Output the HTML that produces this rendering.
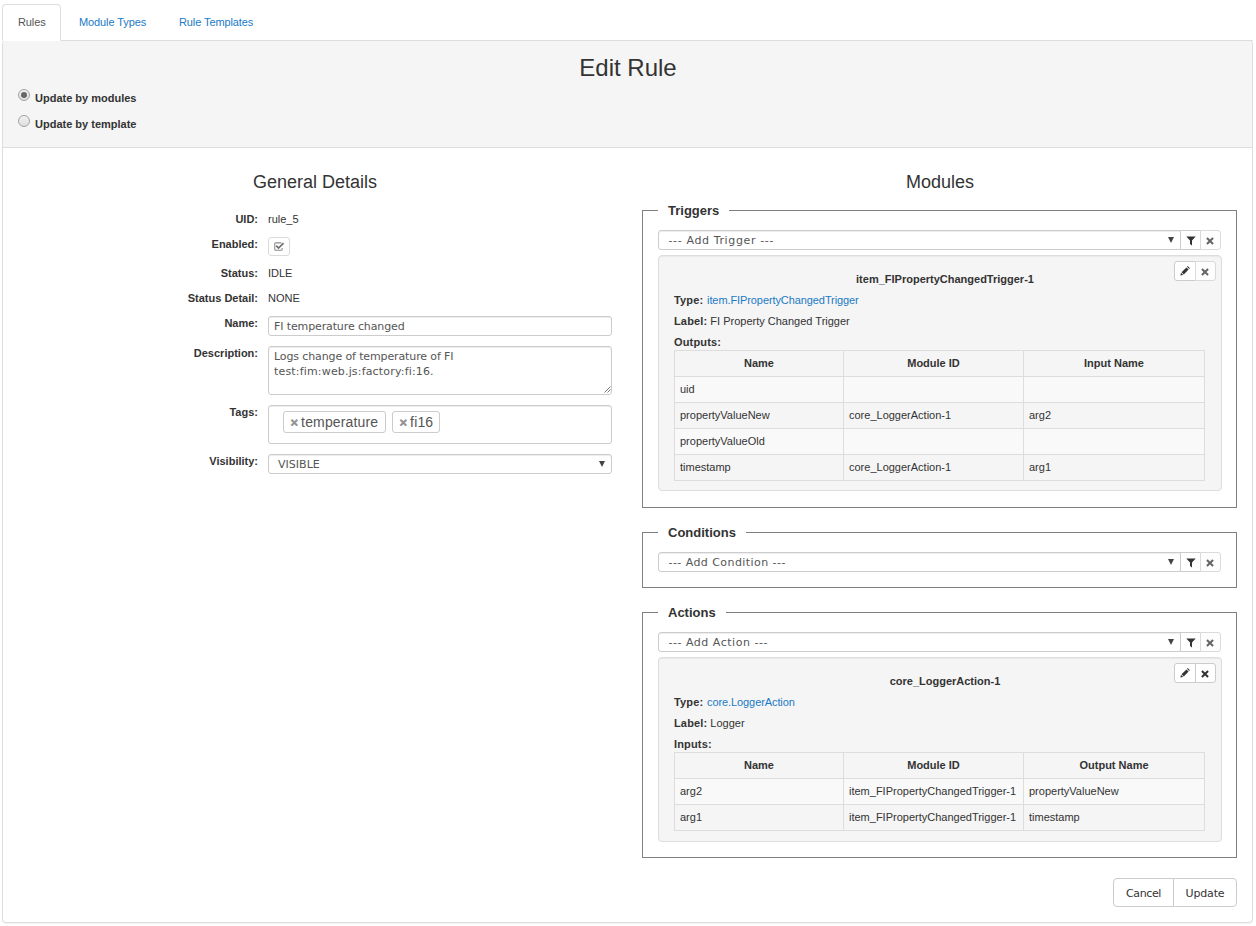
<!DOCTYPE html>
<html lang="en">
<head>
<meta charset="utf-8">
<title>Edit Rule</title>
<style>
*{box-sizing:border-box}
html,body{margin:0;padding:0;background:#fff}
body{width:1256px;height:926px;position:relative;overflow:hidden;font-family:"Liberation Sans",Arial,sans-serif;font-size:11px;line-height:16px;color:#333}
a{color:#1a7ac6;text-decoration:none}
.abs{position:absolute}
.ui{font-family:"DejaVu Sans","Liberation Sans",sans-serif;font-variant-ligatures:none;letter-spacing:-0.12px}

/* tabs */
.tabs{z-index:2;position:absolute;left:2px;top:4px;width:1251px;letter-spacing:-0.1px;height:37px;border-bottom:1px solid #ddd;margin:0;padding:0;list-style:none}
.tabs li{float:left;white-space:nowrap;height:37px;margin-right:2px;padding:9px 15px 0 15px;border:1px solid transparent;border-radius:4px 4px 0 0;line-height:16px}
.tabs li.active{border-color:#ddd;border-bottom-color:#fff;background:#fff;color:#555}

/* panel */
.pin{position:absolute;left:1px;top:0;width:1248px;height:881px}
.panel{position:absolute;left:2px;top:40px;width:1251px;height:883px;border:1px solid #ddd;border-radius:4px;background:#fff;box-shadow:0 1px 1px rgba(0,0,0,.05)}
.phead{position:absolute;left:-1px;top:0;width:1249px;height:107px;background:#f5f5f5;border-bottom:1px solid #ddd;border-radius:3px 3px 0 0}
h1{position:absolute;left:1px;top:14px;width:1248px;margin:0;text-align:center;font-size:24px;line-height:26px;font-weight:normal;color:#333}
h2{position:absolute;margin:0;text-align:center;font-size:18px;line-height:20px;font-weight:normal;color:#333}
.radio{position:absolute;left:15px;font-weight:bold;line-height:16px}
.radio i{position:absolute;left:0;top:0;width:12px;height:12px;border-radius:50%;border:1px solid #a3a3a3;background:linear-gradient(#f2f2f2,#dedede)}
.radio i.on:after{content:"";position:absolute;left:2px;top:2px;width:6px;height:6px;border-radius:50%;background:#666}
.radio span{position:absolute;left:17px;top:1px;white-space:nowrap}

/* left form */
.frm{position:absolute;left:0;top:-1px}
.frm label{position:absolute;left:0;width:254px;text-align:right;font-weight:bold;line-height:16px;white-space:nowrap}
.frm .val{position:absolute;left:264px;line-height:16px;white-space:nowrap}
.inp{position:absolute;left:264px;width:344px;border:1px solid #ccc;border-radius:3px;background:#fff;padding:0 5px;color:#555;font-size:11px;white-space:nowrap;box-shadow:inset 0 1px 1px rgba(0,0,0,.075)}
.chk{position:absolute;left:264px;width:22px;height:19px;border:1px solid #dbdbdb;border-radius:3px;background:#fff}
.chk svg{position:absolute;left:4px;top:3px}
.grip{position:absolute;right:0;bottom:1px}
.tag{position:absolute;top:5px;height:22px;border:1px solid #ccc;border-radius:3px;font-size:14px;line-height:19px;color:#555;padding-left:6px;padding-top:1px;white-space:nowrap;background:#fff;letter-spacing:.15px}
.tag b{font-weight:bold;color:#8f8f8f;-webkit-text-stroke:.5px #8f8f8f;font-size:13px;margin:0 3px 0 .5px;position:relative;top:0px;letter-spacing:0}
.caret{position:absolute;width:0;height:0;border-left:3.5px solid transparent;border-right:3.5px solid transparent;border-top:6px solid #444}

/* right side */
.fs{position:absolute;left:638px;width:595px;border:1px solid #808080}
.lg{position:absolute;left:15px;top:-9px;padding:0 10px;background:#fff;font-size:13px;font-weight:bold;line-height:18px;white-space:nowrap;color:#333}
.sel{position:absolute;left:15px;width:523px;height:20px;border:1px solid #ccc;border-radius:3px 0 0 3px;background:#fff;padding:1px 0 0 9.5px;line-height:18px;font-size:11px;color:#555;white-space:nowrap;letter-spacing:.63px;box-shadow:inset 0 1px 1px rgba(0,0,0,.075)}
.sb{position:absolute;width:20px;height:20px;border:1px solid #ccc;background:#fff}
.sb.dis{border-color:#dadada;background:#fdfdfd}
.sb.dis svg{opacity:.75}
.sb .ic{position:absolute;left:50%;top:50%;transform:translate(-50%,-50%)}
.sb .ic.x{margin:.6px 0 0 -.4px}
.sb .ic.f{margin-top:1px}
.sb .ic.p{margin-top:.2px}
.mod{position:absolute;left:15px;width:564px;border:1px solid #ddd;border-radius:4px;background:#f5f5f5;box-shadow:inset 0 1px 1px rgba(0,0,0,.05)}
.mt{position:absolute;left:5px;width:562px;text-align:center;font-weight:bold;line-height:16px}
.ml{position:absolute;left:15px;line-height:16px;white-space:nowrap}
.ml a{margin-left:.7px;letter-spacing:-0.09px}
.ml b{letter-spacing:.15px}
.mod table{position:absolute;left:15px;width:531px;border-collapse:collapse;table-layout:fixed}
.mod tr:nth-child(even){background:#f9f9f9}
.mod th,.mod td{border:1px solid #ddd;height:26px;padding:0 5px 2px;line-height:16px;text-align:left;vertical-align:middle;white-space:nowrap;overflow:hidden;font-weight:normal}
.mod th{text-align:center;font-weight:bold}
.btn{position:absolute;height:29px;border:1px solid #ccc;background:#fff;text-align:center;line-height:27px;padding-top:1px;font-size:11px;color:#333;white-space:nowrap}
</style>
</head>
<body>
<ul class="tabs">
  <li class="active" style="width:59px">Rules</li>
  <li style="width:98px"><a>Module Types</a></li>
  <li><a>Rule Templates</a></li>
</ul>
<div class="panel"><div class="pin">
  <div class="phead">
    <h1>Edit Rule</h1>
    <div class="radio" style="top:48px"><i class="on"></i><span>Update by modules</span></div>
    <div class="radio" style="top:74px"><i></i><span>Update by template</span></div>
  </div>
  <h2 style="left:-1px;top:131px;width:624px">General Details</h2>
  <h2 style="left:624px;top:131px;width:624px">Modules</h2>

  <!-- General details form -->
  <div class="frm">
    <label style="top:171px">UID:</label><div class="val" style="top:171px">rule_5</div>
    <label style="top:196px">Enabled:</label>
    <div class="chk" style="top:197px"><svg width="12" height="12" viewBox="0 0 12 12"><path d="M9.2 7v1.3a1 1 0 0 1-1 1H2.75a1 1 0 0 1-1-1V2.85a1 1 0 0 1 1-1H8.4" fill="none" stroke="#8c8c8c" stroke-width="1.05"/><path d="M3.2 4.7l2.3 2.3 5.1-4.8" fill="none" stroke="#707070" stroke-width="1.7"/></svg></div>
    <label style="top:225px">Status:</label><div class="val" style="top:225px">IDLE</div>
    <label style="top:250px">Status Detail:</label><div class="val" style="top:250px">NONE</div>
    <label style="top:275px">Name:</label>
    <div class="inp ui" style="top:276px;height:20px;line-height:18px;padding-top:1px">FI temperature changed</div>
    <label style="top:305px">Description:</label>
    <div class="inp ui" style="top:306px;height:49px;line-height:15px;padding-top:2px">Logs change of temperature of FI<br><span style="letter-spacing:.17px">test:fim:web.js:factory:fi:16.</span><svg class="grip" width="8" height="8" viewBox="0 0 8 8"><path d="M7.5 1.5l-6 6M7.5 4.5l-3 3" stroke="#777" stroke-width="1" fill="none"/></svg></div>
    <label style="top:364px">Tags:</label>
    <div class="inp" style="top:365px;height:39px">
      <span class="tag" style="left:14px;width:103px"><b>×</b>temperature</span>
      <span class="tag" style="left:123px;width:48px"><b>×</b>fi16</span>
    </div>
    <label style="top:413px">Visibility:</label>
    <div class="inp ui" style="top:414px;height:20px;line-height:18px;padding-left:9px;padding-top:1px;letter-spacing:0.03px">VISIBLE<i class="caret" style="right:6px;top:6px"></i></div>
  </div>


  <!-- Triggers -->
  <div class="fs" style="top:169px;height:298px">
    <div class="lg">Triggers</div>
    <div class="sel ui" style="top:19px">--- Add Trigger ---<i class="caret" style="right:6px;top:6px"></i></div>
    <div class="sb" style="left:537px;top:19px;width:21px"><svg class="ic f" width="10" height="10" viewBox="0 0 10 10"><path d="M0.3 0.6h9.4L6 4.6v5L4 8V4.6z" fill="#333"/></svg></div>
    <div class="sb dis" style="left:557px;top:19px;width:21px;border-radius:0 3px 3px 0"><svg class="ic x" width="8" height="8" viewBox="0 0 8 8"><path d="M0.95 0.95l6.1 6.1M7.05 0.95L0.95 7.05" stroke="#333" stroke-width="2.05" fill="none"/></svg></div>
    <div class="mod" style="top:44px;height:236px">
      <div class="sb" style="left:515px;top:5px;width:22px;border-radius:3px 0 0 3px"><svg class="ic p" width="10" height="10" viewBox="0 0 10 10"><path d="M0.4 9.6l0.6-2.8 2.2 2.2zM1.6 6.2l4.8-4.8 2.2 2.2-4.8 4.8zM7 0.8l0.7-0.7 2.2 2.2-0.7 0.7z" fill="#333"/></svg></div>
      <div class="sb dis" style="left:536px;top:5px;width:21px;border-radius:0 3px 3px 0"><svg class="ic x" width="8" height="8" viewBox="0 0 8 8"><path d="M0.95 0.95l6.1 6.1M7.05 0.95L0.95 7.05" stroke="#333" stroke-width="2.05" fill="none"/></svg></div>
      <div class="mt" style="top:15px">item_FIPropertyChangedTrigger-1</div>
      <div class="ml" style="top:36px"><b>Type:</b> <a>item.FIPropertyChangedTrigger</a></div>
      <div class="ml" style="top:57px"><b>Label:</b> FI Property Changed Trigger</div>
      <div class="ml" style="top:78px"><b>Outputs:</b></div>
      <table style="top:94px">
        <tr><th style="width:169px">Name</th><th style="width:180px">Module ID</th><th>Input Name</th></tr>
        <tr><td>uid</td><td></td><td></td></tr>
        <tr><td>propertyValueNew</td><td>core_LoggerAction-1</td><td>arg2</td></tr>
        <tr><td>propertyValueOld</td><td></td><td></td></tr>
        <tr><td>timestamp</td><td>core_LoggerAction-1</td><td>arg1</td></tr>
      </table>
    </div>
  </div>

  <!-- Conditions -->
  <div class="fs" style="top:491px;height:56px">
    <div class="lg">Conditions</div>
    <div class="sel ui" style="top:19px;letter-spacing:.44px">--- Add Condition ---<i class="caret" style="right:6px;top:6px"></i></div>
    <div class="sb" style="left:537px;top:19px;width:21px"><svg class="ic f" width="10" height="10" viewBox="0 0 10 10"><path d="M0.3 0.6h9.4L6 4.6v5L4 8V4.6z" fill="#333"/></svg></div>
    <div class="sb dis" style="left:557px;top:19px;width:21px;border-radius:0 3px 3px 0"><svg class="ic x" width="8" height="8" viewBox="0 0 8 8"><path d="M0.95 0.95l6.1 6.1M7.05 0.95L0.95 7.05" stroke="#333" stroke-width="2.05" fill="none"/></svg></div>
  </div>
  <!-- Actions -->
  <div class="fs" style="top:571px;height:246px">
    <div class="lg">Actions</div>
    <div class="sel ui" style="top:19px;letter-spacing:.52px">--- Add Action ---<i class="caret" style="right:6px;top:6px"></i></div>
    <div class="sb" style="left:537px;top:19px;width:21px"><svg class="ic f" width="10" height="10" viewBox="0 0 10 10"><path d="M0.3 0.6h9.4L6 4.6v5L4 8V4.6z" fill="#333"/></svg></div>
    <div class="sb dis" style="left:557px;top:19px;width:21px;border-radius:0 3px 3px 0"><svg class="ic x" width="8" height="8" viewBox="0 0 8 8"><path d="M0.95 0.95l6.1 6.1M7.05 0.95L0.95 7.05" stroke="#333" stroke-width="2.05" fill="none"/></svg></div>
    <div class="mod" style="top:44px;height:185px">
      <div class="sb" style="left:515px;top:5px;width:22px;border-radius:3px 0 0 3px"><svg class="ic p" width="10" height="10" viewBox="0 0 10 10"><path d="M0.4 9.6l0.6-2.8 2.2 2.2zM1.6 6.2l4.8-4.8 2.2 2.2-4.8 4.8zM7 0.8l0.7-0.7 2.2 2.2-0.7 0.7z" fill="#333"/></svg></div>
      <div class="sb" style="left:536px;top:5px;width:21px;border-radius:0 3px 3px 0"><svg class="ic x" width="8" height="8" viewBox="0 0 8 8"><path d="M0.95 0.95l6.1 6.1M7.05 0.95L0.95 7.05" stroke="#333" stroke-width="2.05" fill="none"/></svg></div>
      <div class="mt" style="top:15px">core_LoggerAction-1</div>
      <div class="ml" style="top:36px"><b>Type:</b> <a>core.LoggerAction</a></div>
      <div class="ml" style="top:57px"><b>Label:</b> Logger</div>
      <div class="ml" style="top:78px"><b>Inputs:</b></div>
      <table style="top:94px">
        <tr><th style="width:169px">Name</th><th style="width:180px">Module ID</th><th>Output Name</th></tr>
        <tr><td>arg2</td><td>item_FIPropertyChangedTrigger-1</td><td>propertyValueNew</td></tr>
        <tr><td>arg1</td><td>item_FIPropertyChangedTrigger-1</td><td>timestamp</td></tr>
      </table>
    </div>
  </div>
  <!-- buttons -->
  <div class="btn ui" style="left:1109px;top:837px;width:61px;border-radius:4px 0 0 4px;letter-spacing:-0.4px">Cancel</div>
  <div class="btn ui" style="left:1169px;top:837px;width:64px;border-radius:0 4px 4px 0;letter-spacing:-0.15px">Update</div>


</div></div>
</body>
</html>
